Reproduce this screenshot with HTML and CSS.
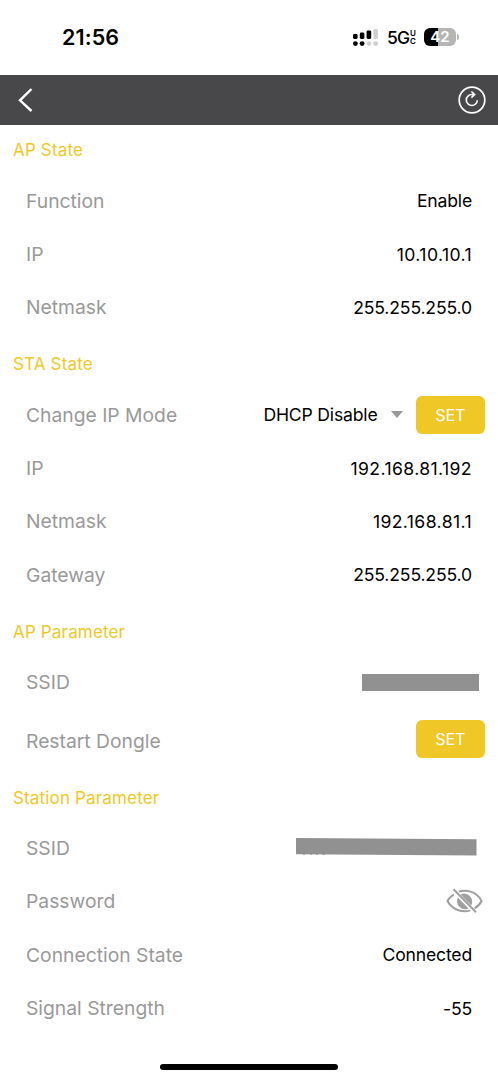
FILE: index.html
```html
<!DOCTYPE html>
<html lang="en">
<head>
<meta charset="utf-8">
<meta name="viewport" content="width=device-width, initial-scale=1">
<title>Network settings</title>
<link rel="stylesheet" href="styles.css">
</head>
<body>
<div class="screen">
  <div class="status">
    <span class="clock">21:56</span>
    <div class="indicators">
      <svg class="signal" width="26" height="18" viewBox="0 0 26 18">
        <g fill="#000"><rect x="0" y="5" width="4.6" height="5" rx="1.4"/><rect x="6.8" y="3.6" width="4.6" height="6.4" rx="1.4"/><rect x="13.6" y="1.4" width="4.6" height="8.6" rx="1.4"/><circle cx="2.4" cy="14.6" r="2.4"/><circle cx="9.1" cy="14.6" r="2.4"/></g>
        <g fill="#d0d0d0"><rect x="20.4" y="0" width="4.6" height="10" rx="1.4"/><circle cx="15.9" cy="14.6" r="2.4"/><circle cx="22.7" cy="14.6" r="2.4"/></g>
      </svg>
      <span class="net">5G</span>
      <span class="band"><span>U</span><span>C</span></span>
      <span class="battery">42</span>
      <span class="cap"></span>
    </div>
  </div>
  <header class="nav">
    <svg class="back" width="16" height="26" viewBox="0 0 16 26" fill="none" stroke="#fff" stroke-width="2.4"><path d="M14.500 2 3 13.300 14.500 24"/></svg>
    <svg class="refresh" width="28" height="28" viewBox="0 0 28 28" fill="none" stroke="#fff"><circle cx="14" cy="14" r="12.8" stroke-width="1.7"/><path d="M19.3 14.2a5.5 5.5 0 1 1-5.5-5.7h2M13.4 5.500l3.200 3-3.200 3.100" stroke-width="1.6"/></svg>
  </header>
  <main>
    <h2 class="heading">AP State</h2>
    <div class="row"><span class="label">Function</span><span class="value word">Enable</span></div>
    <div class="row"><span class="label">IP</span><span class="value narrow">10.10.10.1</span></div>
    <div class="row"><span class="label">Netmask</span><span class="value">255.255.255.0</span></div>

    <h2 class="heading spaced">STA State</h2>
    <div class="row action"><span class="label">Change IP Mode</span><span class="value word">DHCP Disable</span><span class="caret"></span><button class="set">SET</button></div>
    <div class="row"><span class="label">IP</span><span class="value narrow">192.168.81.192</span></div>
    <div class="row"><span class="label">Netmask</span><span class="value narrow">192.168.81.1</span></div>
    <div class="row"><span class="label">Gateway</span><span class="value">255.255.255.0</span></div>

    <h2 class="heading spaced">AP Parameter</h2>
    <div class="row"><span class="label">SSID</span><span class="mask"></span></div>
    <div class="row action tall"><span class="label">Restart Dongle</span><button class="set">SET</button></div>

    <h2 class="heading">Station Parameter</h2>
    <div class="row"><span class="label">SSID</span><svg class="mask-wide" width="181" height="18" viewBox="0 0 181 18"><path fill="#919191" d="M0 0 180.5 1.2V17.5L0 16.2z"/><path d="M7 16.2h2m5 0h2m4 0h2m4 0h3" stroke="#777" stroke-width=".7"/></svg></div>
    <div class="row"><span class="label">Password</span>
      <svg class="eye" width="37" height="26" viewBox="0 0 37 26" fill="none" stroke="#a0a0a0" stroke-width="2"><path d="M8 6.500C4 8.800 2 11.800 1.500 13c1.800 4.100 8 10.300 17 10.300 2.200 0 4-.3 5.800-.9M12.800 3.600c1.800-.6 3.600-.9 5.700-.9C27.700 2.700 34 8.600 35.500 13c-1 2.300-3.300 5.200-7 7.300"/><path fill="#a0a0a0" stroke="none" d="M12 9.500 22.500 20.400A8 8 0 0 1 12 9.500zM14.500 6.600A8 8 0 0 1 25.200 17.400z"/><path d="M7.500 1.300 30 24.300"/></svg>
    </div>
    <div class="row"><span class="label">Connection State</span><span class="value word">Connected</span></div>
    <div class="row"><span class="label">Signal Strength</span><span class="value">-55</span></div>
  </main>
  <div class="home"></div>
</div>
</body>
</html>
```
FILE: styles.css
```css
* { box-sizing: border-box; }
body { margin: 0; background: #fff; font-family: Inter, "Liberation Sans", sans-serif; }
.screen { width: 498px; height: 1080px; display: flex; flex-direction: column; overflow: hidden; }
.status { height: 75px; display: flex; justify-content: space-between; align-items: center; padding: 0 39px 2px 62px; flex: none; }
.clock { font-size: 21.5px; font-weight: 600; letter-spacing: 0.1px; }
.indicators { display: flex; align-items: center; }
.signal { margin-top: 2px; }
.net { font-size: 17.5px; font-weight: 500; letter-spacing: -1px; margin: 2px 0 0 8px; }
.band { display: flex; flex-direction: column; font-size: 8px; line-height: 8px; font-weight: 600; margin: 1px 0 0 1px; width: 6px; }
.band span { height: 8px; }
.battery { width: 32px; height: 18px; margin-left: 8px; border-radius: 6px; background: linear-gradient(90deg, #000 44%, #b5b5b5 44%); color: #fff; font-size: 15px; line-height: 18px; font-weight: 600; text-align: center; }
.cap { width: 2px; height: 6px; margin-left: 1px; border-radius: 0 3px 3px 0; background: #b5b5b5; }
.nav { height: 50.4px; flex: none; background: #48484a; display: flex; align-items: center; justify-content: space-between; padding: 0 12px 0 17px; }
.heading { margin: 0; height: 48.7px; padding-left: 13px; line-height: 50.5px; font-size: 17px; font-weight: 400; letter-spacing: 0.16px; color: #efc827; }
.spaced { margin-top: 5.3px; }
.row { height: 53.35px; display: flex; align-items: center; padding: 0 26px; }
.label { flex: 1; font-size: 19.3px; color: #999; }
.value { font-size: 17.6px; color: #000; letter-spacing: -0.15px; }
.word { letter-spacing: -0.18px; }
.narrow { letter-spacing: 0.4px; }
.action { padding-right: 13px; }
.tall { height: 63.9px; }
.caret { border: 6px solid transparent; border-top: 7px solid #999; border-bottom: 0; margin: 0 13px; }
.set { width: 69.5px; height: 38px; border: 0; padding: 0; border-radius: 6px; background: #efc827; color: #fff; font: 400 16px Inter, sans-serif; }
.tall .set { margin-bottom: 2.9px; }
.mask { width: 117px; height: 17px; margin-right: -7px; background: #919191; }
.mask-wide { margin: -3px -5px 0 0; }
.eye { margin-right: -11px; }
.home { width: 178px; height: 6px; margin: auto auto 10.5px; flex: none; border-radius: 3px; background: #000; }
```
